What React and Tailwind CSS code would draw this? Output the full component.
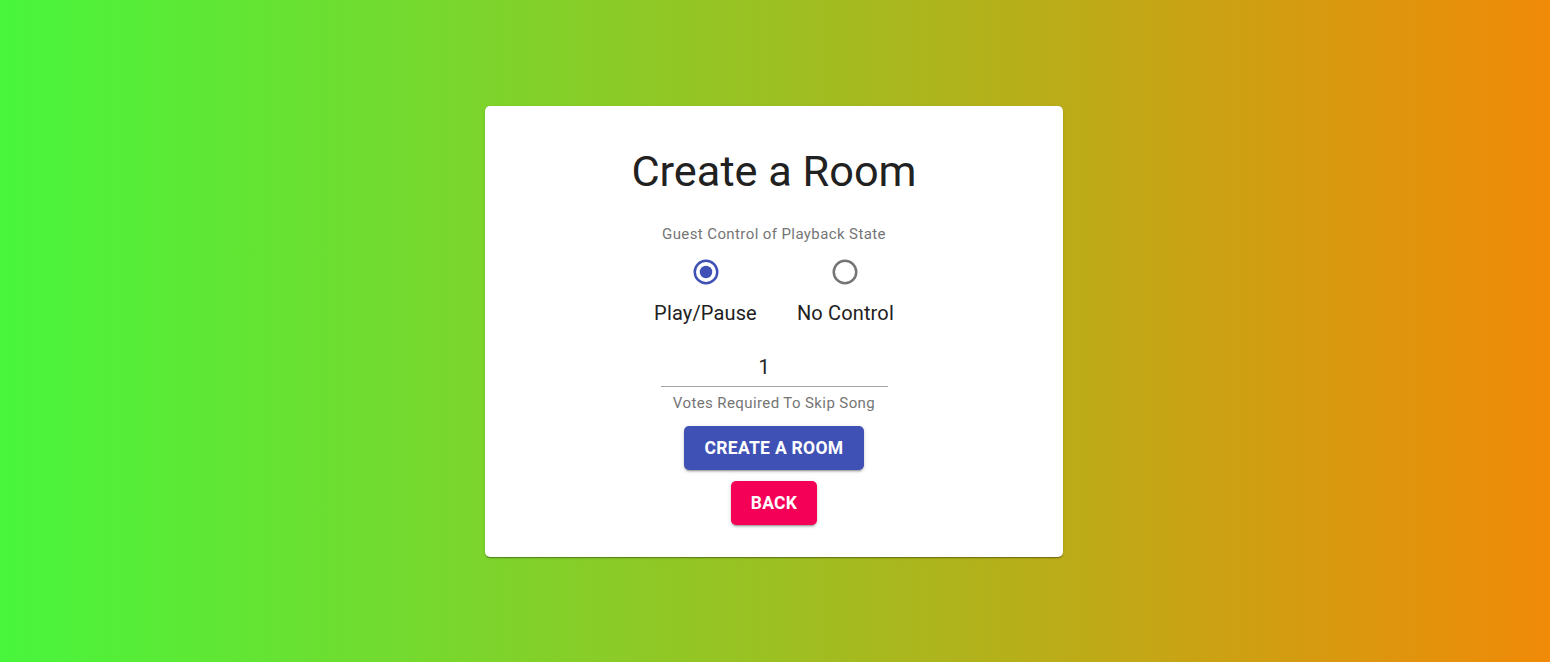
import { useState } from 'react';

function RadioIcon({ checked }) {
  return (
    <svg width="30" height="30" viewBox="0 0 24 24">
      <circle cx="12" cy="12" r="9" fill="none" stroke={checked ? '#3f51b5' : '#757575'} strokeWidth="2" />
      {checked && <circle cx="12" cy="12" r="5" fill="#3f51b5" />}
    </svg>
  );
}

export default function App() {
  const [control, setControl] = useState('play');
  const [votes, setVotes] = useState('1');

  const options = [
    { value: 'play', label: 'Play/Pause' },
    { value: 'none', label: 'No Control' },
  ];

  return (
    <div
      className="h-screen w-full flex items-center justify-center pr-[2px] bg-[linear-gradient(to_right,#48f63c,#f08a08)]"
      style={{ fontFamily: 'Roboto, "Liberation Sans", sans-serif' }}
    >
      <div className="w-[578px] h-[451px] bg-white rounded-[5px] shadow-[0_2px_1px_-1px_rgba(0,0,0,0.2),0_1px_1px_0_rgba(0,0,0,0.14),0_1px_3px_0_rgba(0,0,0,0.12)] flex flex-col items-center pt-[40px]">
        <h4 className="text-[43.3px] leading-[52.5px] text-[#212121] font-normal">Create a Room</h4>

        <p className="mt-[24px] text-[15px] leading-[25px] text-[#757575] tracking-[0.4px]">
          Guest Control of Playback State
        </p>

        <div className="flex flex-row -mt-[1px]">
          {options.map((o) => (
            <label
              key={o.value}
              className="mx-[20px] flex flex-col items-center cursor-pointer"
              onClick={() => setControl(o.value)}
            >
              <span className="h-[51.5px] w-[52.5px] flex items-center justify-center">
                <RadioIcon checked={control === o.value} />
              </span>
              <span className="text-[20px] leading-[30px] text-[#212121] tracking-[0.15px]">{o.label}</span>
            </label>
          ))}
        </div>

        <div className="mt-[18px] w-[227px] flex flex-col">
          <div className="border-b-[1.25px] border-[#a3a3a3] pt-[9.5px] pb-[4.75px]">
            <input
              value={votes}
              onChange={(e) => setVotes(e.target.value)}
              className="w-full pr-[20px] text-center text-[20px] leading-[23.75px] h-[23.75px] text-[#212121] outline-none bg-transparent"
            />
          </div>
          <p className="mt-[4px] text-center text-[15px] leading-[25px] text-[#757575] tracking-[0.4px]">
            Votes Required To Skip Song
          </p>
        </div>

        <button className="mt-[10px] h-[44px] px-[21px] rounded-[5px] bg-[#3f51b5] text-white text-[17.5px] font-bold tracking-[0.3px] uppercase shadow-[0_3px_1px_-2px_rgba(0,0,0,0.2),0_2px_2px_0_rgba(0,0,0,0.14),0_1px_5px_0_rgba(0,0,0,0.12)]">
          Create A Room
        </button>
        <button className="mt-[11px] h-[44px] px-[20px] rounded-[5px] bg-[#f50057] text-white text-[17.5px] font-bold tracking-[0.3px] uppercase shadow-[0_3px_1px_-2px_rgba(0,0,0,0.2),0_2px_2px_0_rgba(0,0,0,0.14),0_1px_5px_0_rgba(0,0,0,0.12)]">
          Back
        </button>
      </div>
    </div>
  );
}
